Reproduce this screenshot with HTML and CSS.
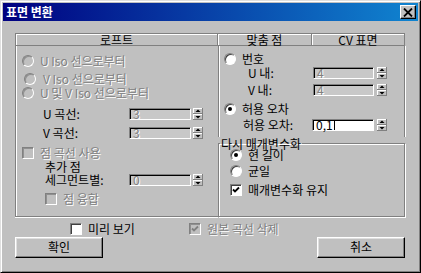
FILE: index.html
```html
<!DOCTYPE html>
<html>
	<head>
		<meta charset="utf-8">
		<title>표면 변환</title>
		<link rel="stylesheet" href="styles.css">
	</head>
	<body>
		<svg class="defs" width="0" height="0">
			<symbol id="arr" viewBox="0 0 10 12">
				<rect x="0" y="0" width="10" height="12" fill="#808080"/>
				<rect x="0" y="0" width="9" height="5" fill="#fff"/>
				<rect x="1" y="1" width="8" height="4" fill="#c0c0c0"/>
				<rect x="0" y="6" width="9" height="5" fill="#fff"/>
				<rect x="1" y="7" width="8" height="4" fill="#c0c0c0"/>
				<polygon points="2.5,4 5,1.5 7.5,4" fill="#000"/>
				<polygon points="2.5,8 7.5,8 5,10.5" fill="#000"/>
			</symbol>
			<symbol id="chk" viewBox="0 0 8 8">
				<path d="M1 3.5 L3 5.5 L7 1.5" fill="none" stroke="currentColor" stroke-width="1.8"/>
			</symbol>
		</svg>
		<div class="window">
			<div class="titlebar">
				<span class="title">표면 변환</span>
				<span class="close">
					<svg width="10" height="9" viewBox="0 0 10 9"><path d="M1 0.5 L9 8.5 M9 0.5 L1 8.5" stroke="#000" stroke-width="1.8"/></svg>
				</span>
			</div>
			<div class="content">
				<div class="panels">
					<div class="loft">
						<div class="head">로프트</div>
						<div class="loftBody">
							<div class="row rowA dis"><i class="radio off"></i>U Iso 선으로부터</div>
							<div class="row rowB dis"><i class="radio off"></i>V Iso 선으로부터</div>
							<div class="row rowC dis"><i class="radio off"></i>U 및 V Iso 선으로부터</div>
							<div class="row rowD">
								<span class="lbl">U 곡선:</span>
								<span class="field dis">3</span>
								<svg class="arrows"><use href="#arr"/></svg>
							</div>
							<div class="row rowE">
								<span class="lbl">V 곡선:</span>
								<span class="field dis">3</span>
								<svg class="arrows"><use href="#arr"/></svg>
							</div>
							<div class="row rowF dis"><i class="box off"></i>점 곡선 사용</div>
							<div class="row rowG">
								<span class="lbl two"><span>추가 점</span><span>세그먼트별:</span></span>
								<span class="field dis">0</span>
								<svg class="arrows"><use href="#arr"/></svg>
							</div>
							<div class="row rowH dis"><i class="box off"></i>점 융합</div>
						</div>
					</div>
					<div class="side">
						<div class="tabs">
							<div class="tab">맞춤 점</div>
							<div class="tab on">CV 표면</div>
						</div>
						<div class="page">
							<div class="row r1"><i class="radio"></i>번호</div>
							<div class="row r2">
								<span class="lbl">U 내:</span>
								<span class="field dis">4</span>
								<svg class="arrows"><use href="#arr"/></svg>
							</div>
							<div class="row r3">
								<span class="lbl">V 내:</span>
								<span class="field dis">4</span>
								<svg class="arrows"><use href="#arr"/></svg>
							</div>
							<div class="row r4"><i class="radio sel"></i>허용 오차</div>
							<div class="row r5">
								<span class="lbl">허용 오차:</span>
								<span class="field live">0,1<b class="caret"></b></span>
								<svg class="arrows"><use href="#arr"/></svg>
							</div>
						</div>
						<fieldset class="group">
							<legend>다시 매개변수화</legend>
							<div class="row g1"><i class="radio sel"></i>현 길이</div>
							<div class="row g2"><i class="radio"></i>균일</div>
							<div class="row g3"><i class="box"><svg><use href="#chk"/></svg></i>매개변수화 유지</div>
						</fieldset>
					</div>
				</div>
				<div class="checks">
					<div class="row preview"><i class="box"></i>미리 보기</div>
					<div class="row dis"><i class="box off"><svg><use href="#chk"/></svg></i>원본 곡선 삭제</div>
				</div>
				<div class="buttons">
					<div class="btn">확인</div>
					<div class="btn">취소</div>
				</div>
			</div>
		</div>
	</body>
</html>
```

FILE: styles.css
```css
*{
	padding: 0;
	margin: 0;
	box-sizing: border-box;
}
body{
	width: 421px;
	height: 273px;
	overflow: hidden;
	background-color: #c0c0c0;
	font: 12px/12px "Noto Sans CJK KR", "Liberation Sans", sans-serif;
	color: #000;
}
.defs{
	position: absolute;
}
.window{
	width: 421px;
	height: 273px;
	padding: 2px;
	border: 1px solid;
	border-color: #dfdfdf #000 #000 #dfdfdf;
	box-shadow: inset 1px 1px #fff, inset -1px -1px #808080;
	display: flex;
	flex-direction: column;
}
.titlebar{
	height: 18px;
	display: flex;
	align-items: center;
	justify-content: space-between;
	padding: 0 2px 0 3px;
	background: linear-gradient(to right, #000080, #1084d0);
}
.title{
	color: #fff;
	font-weight: bold;
	font-size: 12px;
}
.close{
	width: 16px;
	height: 14px;
	display: flex;
	align-items: center;
	justify-content: center;
	background-color: #c0c0c0;
	border: 1px solid;
	border-color: #fff #000 #000 #fff;
	box-shadow: inset -1px -1px #808080;
}
.content{
	flex: 1;
	display: flex;
	flex-direction: column;
	padding: 12px 13px 0 12px;
}
.panels{
	display: flex;
	height: 184px;
}
/* 왼쪽 로프트 패널 */
.loft{
	width: 203px;
	display: flex;
	flex-direction: column;
}
.head, .tab{
	height: 13px;
	line-height: 11px;
	text-align: center;
	border: 1px solid #808080;
	box-shadow: inset 1px 1px #fff;
}
.loftBody{
	flex: 1;
	display: flex;
	flex-direction: column;
	border-left: 1px solid #808080;
	border-bottom: 1px solid #808080;
	box-shadow: inset 1px 0 #fff, 0 1px #fff;
}
.row{
	display: flex;
	align-items: center;
	height: 14px;
	white-space: nowrap;
}
.dis{
	color: #808080;
	text-shadow: 1px 1px 0 #fff;
}
.radio{
	width: 12px;
	height: 12px;
	flex: none;
	border-radius: 50%;
	border: 1px solid;
	border-color: #808080 #fff #fff #808080;
	box-shadow: inset 1px 1px #404040;
	background-color: #fff;
	display: flex;
	align-items: center;
	justify-content: center;
}
.radio.off{
	background-color: #c0c0c0;
	box-shadow: inset 1px 1px #909090;
}
.radio.sel::after{
	content: "";
	width: 4px;
	height: 4px;
	border-radius: 50%;
	background-color: #000;
}
.box{
	width: 12px;
	height: 12px;
	flex: none;
	border: 1px solid;
	border-color: #808080 #fff #fff #808080;
	box-shadow: inset 1px 1px #404040;
	background-color: #fff;
	color: #000;
	display: flex;
	align-items: center;
	justify-content: center;
}
.box.off{
	background-color: #c0c0c0;
	box-shadow: inset 1px 1px #909090;
	color: #808080;
}
.box svg{
	width: 8px;
	height: 8px;
}
.rowA{ margin-top: 8px; }
.rowA .radio{ margin: 0 6px; }
.rowB{ margin-top: 4px; }
.rowB .radio{ margin: 0 7px 0 8px; }
.rowC .radio{ margin: 0 6px; }
.rowD{ margin-top: 8px; height: 12px; }
.rowE{ margin-top: 7px; height: 12px; }
.rowD .lbl, .rowE .lbl{
	width: 113px;
	padding-left: 27px;
}
.rowF{ margin-top: 8px; height: 12px; }
.rowF .box{ margin: 0 6px; }
.rowG{ margin-top: 1px; height: 26px; align-items: flex-end; }
.rowG .lbl{
	width: 113px;
	padding-left: 29px;
	align-self: center;
	display: flex;
	flex-direction: column;
}
.rowG .lbl span{
	height: 13px;
	line-height: 13px;
}
.rowH{ margin-top: 6px; height: 13px; }
.rowH .box{ margin: 0 6px 0 29px; }
.field{
	height: 12px;
	width: 62px;
	flex: none;
	padding-left: 3px;
	line-height: 10px;
	border: 1px solid;
	border-color: #808080 #fff #fff #808080;
	box-shadow: inset 1px 1px #000;
	background-color: #c8c8c8;
	display: flex;
	align-items: center;
}
.field.live{
	background-color: #fff;
}
.caret{
	width: 1px;
	height: 9px;
	margin-left: 1px;
	background-color: #000;
}
.arrows{
	width: 10px;
	height: 12px;
	flex: none;
	margin-left: 2px;
}
/* 오른쪽 탭 */
.side{
	width: 187px;
	display: flex;
	flex-direction: column;
}
.tabs{
	display: flex;
}
.tab{
	width: 94px;
	border-left: none;
}
.tab.on{
	width: 93px;
}
.page{
	height: 91px;
	display: flex;
	flex-direction: column;
	border-left: 1px solid #808080;
	border-right: 1px solid #808080;
	box-shadow: inset 1px 0 #fff, 1px 0 #fff;
}
.r1{ margin-top: 6px; }
.r1 .radio, .r4 .radio{ margin: 0 6px 0 5px; }
.r2{ margin-top: 1px; height: 12px; }
.r3{ margin-top: 5px; height: 12px; }
.r2 .lbl, .r3 .lbl{
	width: 94px;
	padding-left: 29px;
}
.r2 .arrows, .r3 .arrows, .r5 .arrows{ margin-left: 3px; }
.r2 .field, .r3 .field{ width: 61px; }
.r4{ margin-top: 6px; }
.r5{ margin-top: 3px; height: 12px; }
.r5 .lbl{
	width: 93px;
	padding-left: 24px;
}
.group{
	height: 80px;
	border: 1px solid #808080;
	box-shadow: 1px 1px #fff, inset 1px 1px #fff;
	display: flex;
	flex-direction: column;
	min-width: 0;
}
.group legend{
	margin-left: 1px;
	padding: 0 1px;
	line-height: 13px;
}
.g1{ margin-top: -1px; height: 12px; }
.g2{ margin-top: 4px; height: 12px; }
.g3{ margin-top: 7px; height: 12px; }
.group .radio, .group .box{ margin: 0 6px 0 11px; }
/* 아래 체크 */
.checks{
	display: flex;
	margin-top: 6px;
	height: 12px;
}
.checks .row{
	height: 12px;
}
.preview{
	width: 174px;
	padding-left: 55px;
}
.checks .box{
	margin-right: 6px;
}
.buttons{
	display: flex;
	justify-content: space-between;
	margin-top: 2px;
}
.btn{
	width: 88px;
	height: 21px;
	line-height: 17px;
	text-align: center;
	border: 1px solid;
	border-color: #fff #000 #000 #fff;
	box-shadow: inset -1px -1px #808080, inset 1px 1px #dfdfdf;
}
```
